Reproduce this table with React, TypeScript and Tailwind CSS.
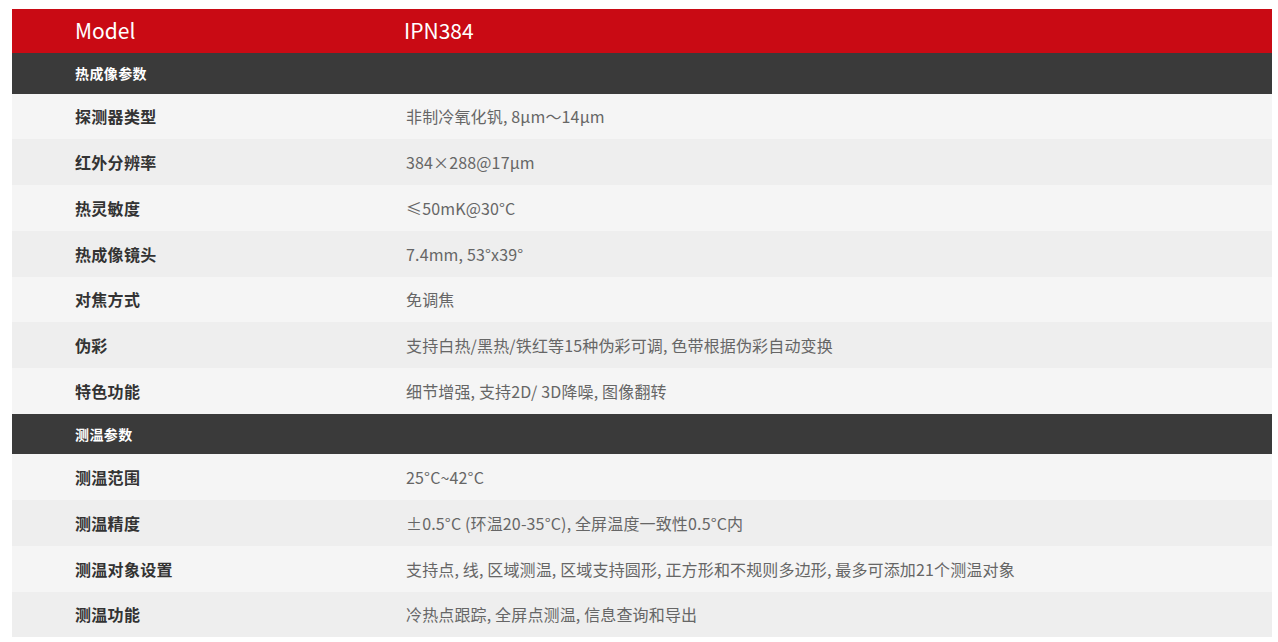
const sections = [
  {
    title: '热成像参数',
    rows: [
      ['探测器类型', '非制冷氧化钒, 8μm～14μm'],
      ['红外分辨率', '384×288@17μm'],
      ['热灵敏度', '≤50mK@30°C'],
      ['热成像镜头', '7.4mm, 53°x39°'],
      ['对焦方式', '免调焦'],
      ['伪彩', '支持白热/黑热/铁红等15种伪彩可调, 色带根据伪彩自动变换'],
      ['特色功能', '细节增强, 支持2D/ 3D降噪, 图像翻转'],
    ],
  },
  {
    title: '测温参数',
    rows: [
      ['测温范围', '25°C~42°C'],
      ['测温精度', '±0.5°C (环温20-35°C), 全屏温度一致性0.5°C内'],
      ['测温对象设置', '支持点, 线, 区域测温, 区域支持圆形, 正方形和不规则多边形, 最多可添加21个测温对象'],
      ['测温功能', '冷热点跟踪, 全屏点测温, 信息查询和导出'],
    ],
  },
];

export default function App() {
  return (
    <div className="min-h-screen bg-white px-[12px] pt-[9px] [font-family:'Noto_Sans_CJK_SC','Noto_Sans',sans-serif]">
      <div className="w-[1260px]">
        {/* Header */}
        <div className="flex h-[44px] items-center bg-[#c90a14] text-[21px] text-white">
          <div className="w-[392px] pl-[63px]">Model</div>
          <div>IPN384</div>
        </div>

        {sections.map(section => (
          <div key={section.title}>
            <div className="flex h-[40.5px] items-center bg-[#3a3a3a] pl-[63px] text-[14px] font-bold tracking-[0.4px] text-white">
              {section.title}
            </div>
            {section.rows.map(([label, value], i) => (
              <div
                key={label}
                className={`flex h-[45.75px] items-center ${i % 2 === 0 ? 'bg-[#f5f5f5]' : 'bg-[#eeeeee]'}`}
              >
                <div className="w-[394px] pl-[63px] text-[16px] font-bold tracking-[0.3px] text-[#333333]">{label}</div>
                <div className="text-[16px] tracking-[0.15px] text-[#666666]">{value}</div>
              </div>
            ))}
          </div>
        ))}
      </div>
    </div>
  );
}
